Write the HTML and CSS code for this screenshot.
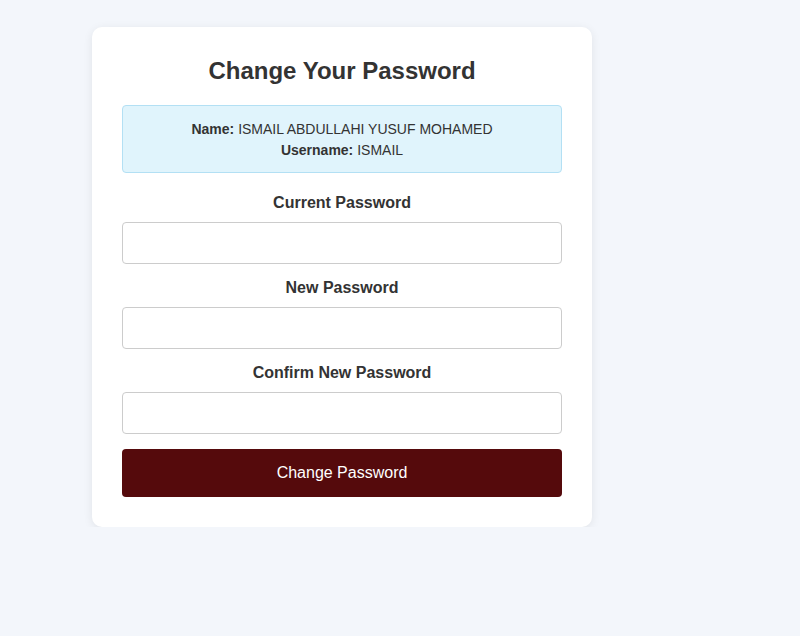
FILE: index.html
```html
<!DOCTYPE html>
<html lang="en">
<head>
<meta charset="utf-8">
<title>Change Your Password</title>
<link rel="stylesheet" href="styles.css">
</head>
<body>
<div class="page">
  <div class="card">
    <h2 class="title">Change Your Password</h2>
    <div class="info">
      <div><strong>Name:</strong> ISMAIL ABDULLAHI YUSUF MOHAMED</div>
      <div><strong>Username:</strong> ISMAIL</div>
    </div>
    <form class="form">
      <div class="group">
        <label class="label" for="cur">Current Password</label>
        <input class="input" id="cur" type="password">
      </div>
      <div class="group">
        <label class="label" for="new">New Password</label>
        <input class="input" id="new" type="password">
      </div>
      <div class="group">
        <label class="label" for="conf">Confirm New Password</label>
        <input class="input" id="conf" type="password">
      </div>
      <button class="btn" type="button">Change Password</button>
    </form>
  </div>
</div>
</body>
</html>
```
FILE: styles.css
```css
html, body {
  margin: 0;
  padding: 0;
}
body {
  background: #f3f6fb;
  font-family: "Liberation Sans", Arial, sans-serif;
  color: #333;
}
.page {
  padding: 27px 0 0 92px;
}
.card {
  width: 500px;
  box-sizing: border-box;
  background: #fff;
  border-radius: 10px;
  padding: 30px;
  box-shadow: 0 2px 10px rgba(0, 0, 0, 0.08);
}
.title {
  margin: 0 0 20px;
  font-size: 24px;
  line-height: 28px;
  font-weight: bold;
  text-align: center;
  color: #333;
}
.info {
  background: #e0f4fc;
  border: 1px solid #b3e0f4;
  border-radius: 4px;
  padding: 13px 12px 11px;
  font-size: 14px;
  line-height: 21px;
  text-align: center;
  color: #333;
  margin-bottom: 21px;
}
.form {
  margin: 0;
}
.group {
  margin-bottom: 15px;
}
.label {
  display: block;
  font-size: 16px;
  line-height: 18px;
  font-weight: bold;
  text-align: center;
  margin-bottom: 10px;
  color: #333;
}
.input {
  display: block;
  width: 100%;
  height: 42px;
  box-sizing: border-box;
  border: 1px solid #ccc;
  border-radius: 4px;
  padding: 10px;
  font-size: 16px;
  background: #fff;
}
.btn {
  display: block;
  width: 100%;
  height: 48px;
  border: none;
  border-radius: 4px;
  background: #550a0c;
  color: #fff;
  font-family: "Liberation Sans", Arial, sans-serif;
  font-size: 16px;
  cursor: pointer;
}
```
